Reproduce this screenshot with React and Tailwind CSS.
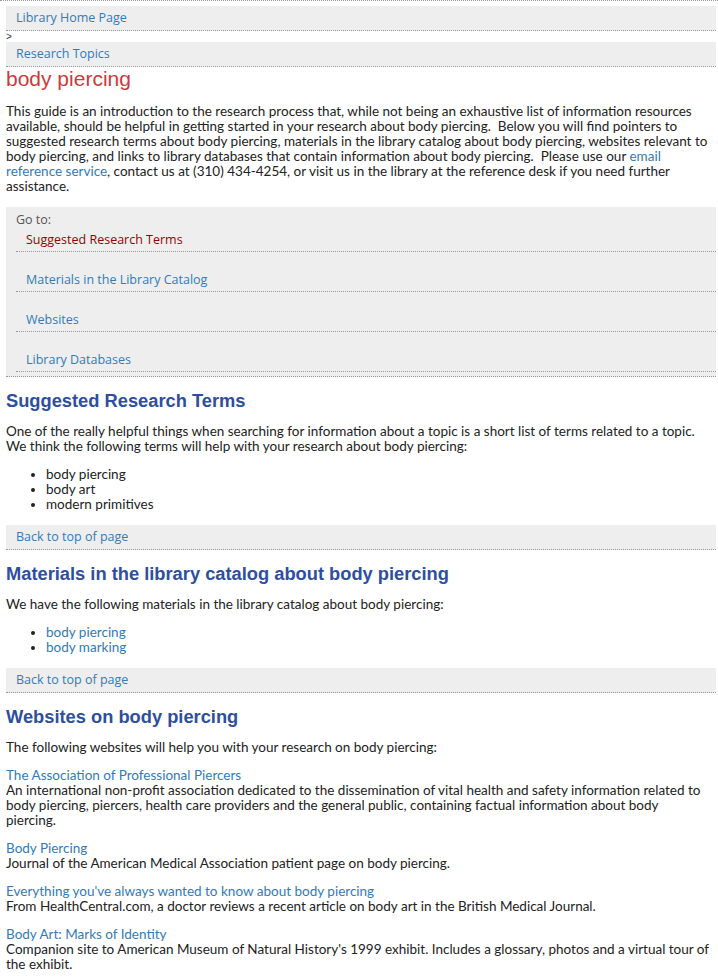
import React from "react";

const NAV = "font-['Open_Sans',sans-serif] text-[12.5px]";
const BODY = "font-['Lato',sans-serif] text-[13.5px] leading-[15px] text-[#222]";
const LINK = "text-[#337ab7]";
const H2 = "font-['Liberation_Sans',Arial,sans-serif] text-[18.3px] leading-[21px] font-bold text-[#2e4e9e]";

function NavBox({ children, className = "" }) {
  return (
    <div
      className={`h-[25px] bg-[#eeeeee] border-b border-dotted border-[#999] pl-[10px] leading-[24px] ${NAV} ${className}`}
    >
      <span className={LINK}>{children}</span>
    </div>
  );
}

function GoItem({ children, first, active }) {
  return (
    <div
      className={`ml-[10px] pl-[10px] ${first ? "pt-[5px]" : "pt-[20px]"} pb-[4px] border-b border-dotted border-[#999] leading-[15px] ${
        active ? "text-[#990000]" : LINK
      }`}
    >
      {children}
    </div>
  );
}

export default function App() {
  const sp = "\u00a0 ";
  return (
    <div className="w-[718px] min-h-screen bg-white overflow-hidden">
      <div className="border-b border-dotted border-[#999]" />
      <div className="pl-[6px] pr-[2px] pb-[8px]">
        <NavBox className="mt-[5px]">Library Home Page</NavBox>
        <div className="h-[11px] text-[10px] leading-[11px] font-['Liberation_Sans',sans-serif] text-[#333]">&gt;</div>
        <NavBox>Research Topics</NavBox>
        <h1 className="font-['Liberation_Sans',Arial,sans-serif] text-[21px] leading-[24px] text-[#cc3a3a]">
          body piercing
        </h1>

        <p className={`mt-[13px] whitespace-nowrap ${BODY}`}>
          This guide is an introduction to the research process that, while not being an exhaustive list of information resources
          <br />
          available, should be helpful in getting started in your research about body piercing.{sp}Below you will find pointers to
          <br />
          suggested research terms about body piercing, materials in the library catalog about body piercing, websites relevant to
          <br />
          body piercing, and links to library databases that contain information about body piercing.{sp}Please use our{" "}
          <span className={LINK}>email</span>
          <br />
          <span className={LINK}>reference service</span>, contact us at (310) 434-4254, or visit us in the library at the reference desk if you need further
          <br />
          assistance.
        </p>

        <div className={`mt-[13px] bg-[#eeeeee] pt-[5px] pb-[4px] border-b border-dotted border-[#999] ${NAV}`}>
          <div className="pl-[10px] leading-[15px] text-[#555]">Go to:</div>
          <GoItem first active>Suggested Research Terms</GoItem>
          <GoItem>Materials in the Library Catalog</GoItem>
          <GoItem>Websites</GoItem>
          <GoItem>Library Databases</GoItem>
        </div>

        <h2 className={`mt-[13px] ${H2}`}>Suggested Research Terms</h2>
        <p className={`mt-[13px] whitespace-nowrap ${BODY}`}>
          One of the really helpful things when searching for information about a topic is a short list of terms related to a topic.
          <br />
          We think the following terms will help with your research about body piercing:
        </p>
        <ul className={`mt-[13px] list-disc pl-[40px] ${BODY}`}>
          <li>body piercing</li>
          <li>body art</li>
          <li>modern primitives</li>
        </ul>
        <NavBox className="mt-[13px]">Back to top of page</NavBox>

        <h2 className={`mt-[13px] ${H2}`}>Materials in the library catalog about body piercing</h2>
        <p className={`mt-[13px] ${BODY}`}>
          We have the following materials in the library catalog about body piercing:
        </p>
        <ul className={`mt-[13px] list-disc pl-[40px] ${BODY}`}>
          <li><span className={LINK}>body piercing</span></li>
          <li><span className={LINK}>body marking</span></li>
        </ul>
        <NavBox className="mt-[13px]">Back to top of page</NavBox>

        <h2 className={`mt-[13px] ${H2}`}>Websites on body piercing</h2>
        <p className={`mt-[13px] ${BODY}`}>
          The following websites will help you with your research on body piercing:
        </p>

        <div className={`mt-[13px] whitespace-nowrap ${BODY}`}>
          <div className={LINK}>The Association of Professional Piercers</div>
          <div>
            An international non-profit association dedicated to the dissemination of vital health and safety information related to
            <br />
            body piercing, piercers, health care providers and the general public, containing factual information about body
            <br />
            piercing.
          </div>
        </div>
        <div className={`mt-[13px] whitespace-nowrap ${BODY}`}>
          <div className={LINK}>Body Piercing</div>
          <div>Journal of the American Medical Association patient page on body piercing.</div>
        </div>
        <div className={`mt-[13px] whitespace-nowrap ${BODY}`}>
          <div className={LINK}>Everything you've always wanted to know about body piercing</div>
          <div>From HealthCentral.com, a doctor reviews a recent article on body art in the British Medical Journal.</div>
        </div>
        <div className={`mt-[13px] whitespace-nowrap ${BODY}`}>
          <div className={LINK}>Body Art: Marks of Identity</div>
          <div>
            Companion site to American Museum of Natural History's 1999 exhibit. Includes a glossary, photos and a virtual tour of
            <br />
            the exhibit.
          </div>
        </div>
      </div>
    </div>
  );
}
